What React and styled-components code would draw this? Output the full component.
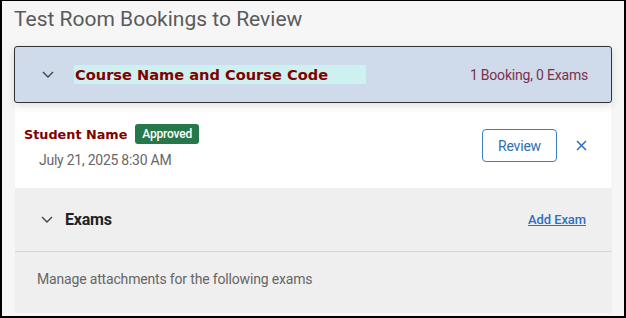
import React from 'react'
import styled, { createGlobalStyle } from 'styled-components';

const GlobalStyle = createGlobalStyle`
  * { box-sizing: border-box; }
  body {
    margin: 0;
    font-family: Roboto, "Liberation Sans", sans-serif;
  }
`;

const Chevron = () => (
  <svg width="12" height="7" viewBox="0 0 12 7">
    <polyline points="1,1 6,6 11,1" fill="none" stroke="#444" strokeWidth="1.4" />
  </svg>
)

const CloseIcon = () => (
  <svg width="11" height="11" viewBox="0 0 11 11">
    <path d="M1 1 L10 10 M10 1 L1 10" stroke="#2f6fc0" strokeWidth="1.5" />
  </svg>
)

const App = () => {
  return (
    <Frame>
      <GlobalStyle />
      <Title>Test Room Bookings to Review</Title>
      <Accordion>
        <CourseHeader>
          <ChevronBox><Chevron /></ChevronBox>
          <CourseName>Course Name and Course Code</CourseName>
          <Count>1 Booking, 0 Exams</Count>
        </CourseHeader>
        <BookingRow>
          <BookingInfo>
            <NameLine>
              <StudentName>Student Name</StudentName>
              <Badge>Approved</Badge>
            </NameLine>
            <DateText>July 21, 2025 8:30 AM</DateText>
          </BookingInfo>
          <Actions>
            <ReviewButton>Review</ReviewButton>
            <IconButton aria-label="Remove"><CloseIcon /></IconButton>
          </Actions>
        </BookingRow>
        <ExamsSection>
          <ExamsHeader>
            <ChevronBox variant="small"><Chevron /></ChevronBox>
            <ExamsTitle>Exams</ExamsTitle>
            <AddLink href="#">Add Exam</AddLink>
          </ExamsHeader>
          <ExamsBody>Manage attachments for the following exams</ExamsBody>
        </ExamsSection>
      </Accordion>
    </Frame>
  )
}

export default App

const Frame = styled.div`
  width: 626px;
  height: 318px;
  border: 2px solid #000;
  border-top-width: 1px;
  background: #f6f6f6;
  padding: 0 12px;
  overflow: hidden;
`;
const Title = styled.h1`
  margin: 6px 0 0 0;
  font-size: 21px;
  line-height: 24px;
  font-weight: 400;
  color: #5a5a5a;
`;
const Accordion = styled.div`
  margin-top: 15px;
  width: 598px;
`;
const CourseHeader = styled.div`
  height: 57px;
  display: flex;
  align-items: center;
  background: #cfdbea;
  border: 1.5px solid #333;
  border-radius: 3px;
  padding: 0 23px 0 27px;
  position: relative;
  z-index: 1;
  box-shadow: 0 3px 8px rgba(0, 0, 0, 0.12);
`;
const ChevronBox = styled.span`
  display: flex;
  width: ${(props) => props.variant === "small" ? "24px" : "32px"};
`;
const CourseName = styled.span`
  width: 292px;
  height: 19px;
  background: #cdf0f0;
  font-family: "DejaVu Sans", Verdana, sans-serif;
  font-weight: bold;
  font-size: 14.6px;
  line-height: 19px;
  color: #800000;
  padding-left: 1px;
`;
const Count = styled.span`
  margin-left: auto;
  font-size: 14px;
  letter-spacing: -0.2px;
  color: #7b3050;
`;
const BookingRow = styled.div`
  margin: 0 1px;
  background: #fff;
  height: 85px;
  display: flex;
  align-items: flex-start;
  padding: 21px 24px 0 9px;
`;
const BookingInfo = styled.div`
  display: flex;
  flex-direction: column;
`;
const NameLine = styled.div`
  display: flex;
  align-items: center;
  gap: 8px;
`;
const StudentName = styled.span`
  font-family: "DejaVu Sans", Verdana, sans-serif;
  font-weight: bold;
  font-size: 12.8px;
  color: #800000;
`;
const Badge = styled.span`
  background: #26784a;
  color: #fff;
  font-size: 12px;
  font-weight: 500;
  letter-spacing: -0.2px;
  height: 20px;
  line-height: 20px;
  padding: 0 7px;
  border-radius: 3px;
`;
const DateText = styled.span`
  margin: 6px 0 0 15px;
  font-size: 14px;
  letter-spacing: -0.25px;
  line-height: 20px;
  color: #666;
`;
const Actions = styled.div`
  margin-left: auto;
  margin-top: 5px;
  display: flex;
  align-items: center;
  gap: 19px;
`;
const ReviewButton = styled.button`
  width: 75px;
  height: 33px;
  background: #fff;
  border: 1px solid #3d7cc6;
  border-radius: 4px;
  font-family: Roboto, sans-serif;
  font-size: 14px;
  letter-spacing: -0.2px;
  color: #2f6db5;
`;
const IconButton = styled.button`
  background: none;
  border: none;
  padding: 0;
  display: flex;
`;
const ExamsSection = styled.div`
  margin: 0 0 0 1px;
  background: #efefef;
`;
const ExamsHeader = styled.div`
  height: 64px;
  display: flex;
  align-items: center;
  padding: 0 26px 0 26px;
  border-bottom: 1.5px solid #d6d6d6;
`;
const ExamsTitle = styled.span`
  font-size: 16px;
  font-weight: 700;
  letter-spacing: -0.2px;
  color: #222;
`;
const AddLink = styled.a`
  margin-left: auto;
  font-size: 13px;
  font-weight: 500;
  letter-spacing: -0.1px;
  color: #2f6fc0;
  text-decoration: underline;
`;
const ExamsBody = styled.div`
  height: 61px;
  padding: 17px 0 0 22px;
  font-size: 14px;
  letter-spacing: -0.17px;
  line-height: 20px;
  color: #666;
`;
